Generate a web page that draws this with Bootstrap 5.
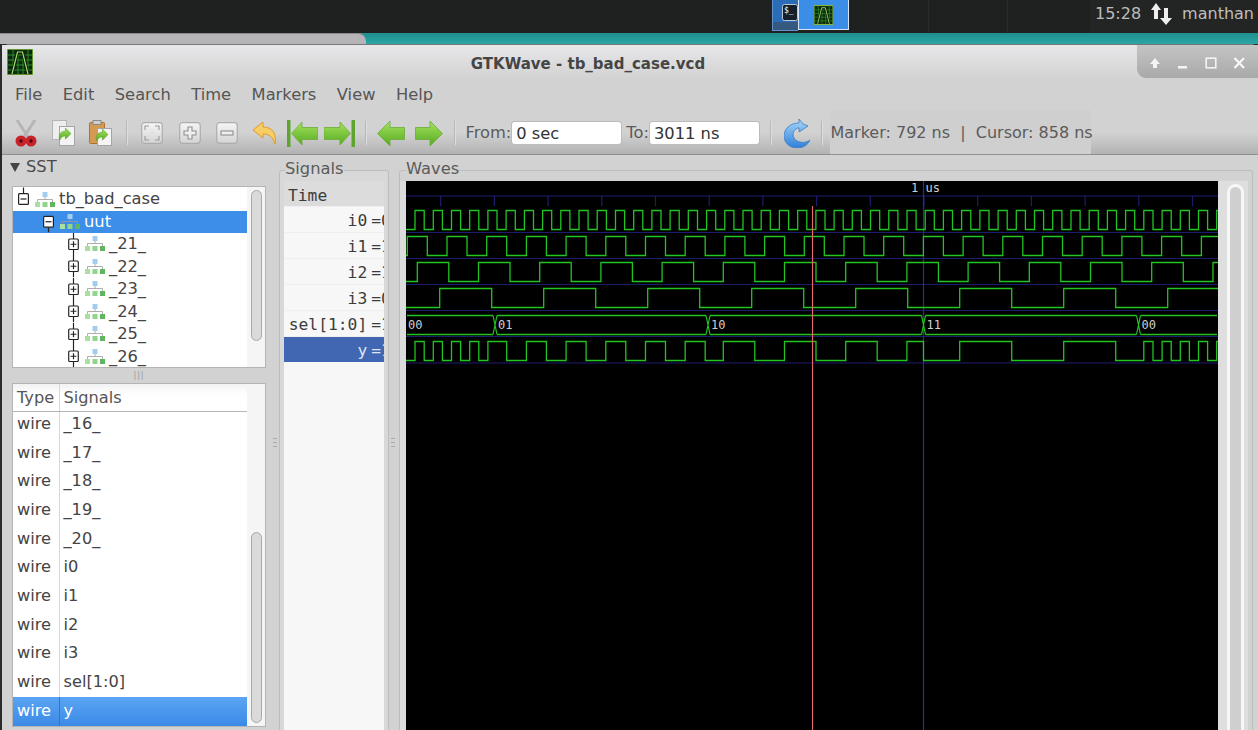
<!DOCTYPE html>
<html lang="en">
<head>
  <meta charset="UTF-8">
  <meta name="viewport" content="width=device-width, initial-scale=1.0">
  <title>GTKWave - tb_bad_case.vcd</title>
  <link rel="stylesheet" href="https://cdn.jsdelivr.net/npm/bootstrap@5.3.0/dist/css/bootstrap.min.css">
  <style>
    html, body { height: 100%; overflow: hidden; }
    body { background: #2b2b2b; font-family: "DejaVu Sans", sans-serif; font-size: 16.3px; color: #4a4a4a; display: flex; flex-direction: column; }

    /* desktop panel */
    .desk-bar { height: 33px; flex: none; background: #1f2120; color: #bdbdbd; }
    .task-group { margin-left: 772px; width: 156px; height: 31px; }
    .task-term { width: 26px; height: 31px; background: linear-gradient(#2a6cb8 0 74%, #35597f 74%); border: 1px solid #5f93cc; border-right: 0; border-top: 0; }
    .task-wave { width: 51px; height: 30px; background: #3b8ee8; border: 1px solid #d5e6f8; border-top: 0; }
    .task-slot { height: 33px; border-left: 1px solid #2a2c2b; }
    .slot-a { width: 79px; }
    .slot-b { width: 83px; }
    .tray { width: 168px; height: 33px; background: #232524; padding: 0 0 5px 5px; gap: 9px; font-size: 16px; }
    .desk-strip { height: 11px; flex: none; background: linear-gradient(#1f8f8f, #2aa6a6); }
    .other-win { width: 366px; background: #b6b4b6; border-top: 1px solid #8d8b8d; border-top-right-radius: 8px; }

    /* window chrome */
    .gtk-win { flex: 1 1 0; min-height: 0; margin-left: 2px; background: #d2d2d2; border-top-left-radius: 7px; border-top-right-radius: 7px; border-top: 1px solid #777; }
    .title-bar { height: 33px; flex: none; background: linear-gradient(#e7e6e9, #d3d3d3); padding-left: 5px; }
    .win-title { font-size: 15px; font-weight: 700; color: #454545; padding: 6px 0 0 6px; }
    .win-btns { width: 121px; height: 33px; background: linear-gradient(#c4c4c4, #a9a9a9); border-bottom-left-radius: 9px; padding: 3px 0 0 4px; }
    .win-btn { width: 28px; }
    .menu-bar { height: 32px; flex: none; padding: 3px 0 0 13px; gap: 20.5px; color: #555; }
    .tool-bar { height: 45px; flex: none; padding: 1px 0 0 5px; background: linear-gradient(#d2d2d2 0 50%, #b2b2b2 98%, #8f8f8f 98%); color: #5b5b5b; }
    .tool-btn { width: 37.5px; }
    .tool-sep { width: 14px; display: flex; justify-content: center; }
    .tool-sep::before { content: ""; width: 2px; height: 24px; background: #dedede; border-left: 1px solid #b8b8b8; }
    .tool-input.form-control { width: 111px; height: 24px; min-height: 0; padding: 0 4px; font-size: 16.3px; line-height: 22px; color: #333; border: 1px solid #bcbcbc; border-radius: 3px; font-family: inherit; }
    .tool-status { background: #cfcfcf; white-space: pre; width: 261px; margin: -1px 0 1px 1px; padding-top: 2px; align-self: stretch; font-size: 16px; }

    /* panes */
    .work-area { flex: 1 1 0; min-height: 0; }
    .pane-sst { width: 270px; flex: none; padding: 0 6px 0 10px; }
    .sst-label { height: 31px; padding-bottom: 6px; gap: 6px; }
    .sst-label i { width: 0; height: 0; border-left: 5px solid transparent; border-right: 5px solid transparent; border-top: 9px solid #444; margin-left: -2px; }
    .box-frame { background: #fff; border: 1px solid #b4b4b4; overflow: hidden; }
    .tree-box { height: 182px; flex: none; }
    .tree-list { width: 234px; color: #444; }
    .tree-row { height: 22.5px; white-space: nowrap; }
    .tree-row.first { height: 24px; }
    .tree-row.sel { height: 21.5px; background: #3c8ee8; color: #fff; }
    .depth-0 { padding-left: 5px; }
    .depth-1 { padding-left: 30px; }
    .depth-2 { padding-left: 55px; }
    .tree-exp { width: 11px; height: 100%; margin-right: 6px; flex: none; }
    .tree-ico { width: 20px; height: 15px; margin-right: 4px; flex: none; }
    .tree-txt { padding-top: 1px; }
    .scroll-col { flex: 1 1 0; background: #f5f5f5; display: flex; justify-content: center; }
    .scroll-thumb { width: 11px; background: #dadada; border: 1px solid #a8a8a8; border-radius: 6px; }
    .tree-box .scroll-thumb { height: 151px; margin-top: 3px; }
    .sig-box { flex: 1 1 0; min-height: 0; margin-bottom: 3px; }
    .sig-box .scroll-thumb { height: 191px; margin-top: 148px; }
    .grip-h { height: 15px; flex: none; color: #999; font-size: 8px; line-height: 15px; text-align: center; letter-spacing: 1px; }
    .grip-v { width: 7px; flex: none; padding-right: 2px; }
    .grip-wide { width: 10px; }
    .grip-dots { width: 4px; height: 9px; border-top: 1px solid #aaa; border-bottom: 1px solid #aaa; position: relative; }
    .grip-dots::after { content: ""; position: absolute; left: 0; right: 0; top: 3px; border-top: 1px solid #aaa; }
    .sig-table { width: 234px; table-layout: fixed; margin: 0; }
    .sig-table th, .sig-table td { padding: 0 0 0 4px; border: 0; border-right: 1px solid #d8d8d8; height: 28.7px; line-height: 28.7px; vertical-align: top; font-size: 16.2px; font-weight: 400; color: #444; background: #fff; }
    .sig-table th:first-child, .sig-table td:first-child { width: 46px; }
    .sig-table th:last-child, .sig-table td:last-child { border-right: 0; }
    .sig-table th { height: 27px; padding-top: 1px; line-height: 26px; color: #555; border-bottom: 1px solid #b5b5b5; background: linear-gradient(#f2f2f2, #fff 40%); }
    .sig-table tr.short td { height: 27px; line-height: 24.5px; }
    .sig-table tr.sel td { background: linear-gradient(#5ba4f3, #3a8ae6); color: #fff; border-right-color: #2f76c8; }

    .gtk-frame { border: 1px solid #bdbdbd; border-bottom: 0; border-radius: 3px 3px 0 0; padding: 0; margin: 4px 0 0; min-width: 0; }
    .gtk-frame legend { float: none; width: auto; margin: 0 0 0 6px; padding: 0 0 2px; font-size: 16.3px; line-height: 20px; color: #5b5b5b; }
    .pane-signals { width: 110px; flex: none; background: #d8d8d8; padding: 0 4px; }
    .pane-signals legend { margin-left: 1px; }
    .sig-names { font-family: "DejaVu Sans Mono", monospace; font-size: 16.3px; background: #f7f7f7; height: 549px; color: #3c3c3c; }
    .name-row { height: 26px; line-height: 27px; white-space: pre; border-bottom: 1px solid #efefef; }
    .name-head { background: #dcdcdc; padding-left: 4px; line-height: 30px; }
    .name-row.sel { background: #4267b2; color: #dbe6fa; border-bottom: 0; height: 25px; }
    .name-eq { margin-left: 4px; }
    .name-val { display: inline-block; width: 3px; overflow: hidden; vertical-align: bottom; }
    .pane-waves { width: 854px; flex: none; background: #d2d2d2; }
    .wave-wrap { width: 848px; height: 549px; overflow: hidden; padding-left: 6px; background: #dcdcdc; }
    .wave-svg { display: block; width: 812px; height: 549px; background: #000; flex: none; }
    .wave-scroll { width: 30px; background: #dedede; padding: 3px 0 0 9px; }
    .wave-thumb { width: 17px; height: 600px; background: #cfcfcf; border: 3px solid #f7f7f7; border-radius: 9px; }
    .wave-label { font-family: "DejaVu Sans Mono", monospace; font-size: 12px; fill: #cfcfcf; }
  </style>
</head>

<body>
  <svg width="0" height="0" class="position-absolute">
    <defs>
      <linearGradient id="grnFill" x1="0" y1="0" x2="0" y2="1">
        <stop offset="0" stop-color="#a5e25c"/><stop offset="1" stop-color="#55ab22"/>
      </linearGradient>
      <linearGradient id="bluFill" x1="0" y1="0" x2="0" y2="1">
        <stop offset="0" stop-color="#a9d8f8"/><stop offset="1" stop-color="#2f7fd8"/>
      </linearGradient>
      <linearGradient id="keyFill" x1="0" y1="0" x2="0" y2="1">
        <stop offset="0" stop-color="#f5f5f5"/><stop offset="1" stop-color="#d4d4d4"/>
      </linearGradient>
      <symbol id="icoWave" viewBox="0 0 26 26">
        <rect width="26" height="26" fill="#0c2a0c" stroke="#7fb83a" stroke-width="1.5"/>
        <path d="M1 6H25M1 11H25M1 16H25M1 21H25M6 1V25M11 1V25M16 1V25M21 1V25" stroke="#2c8a2c" stroke-width="1"/>
        <path d="M5 25L10.5 3H15.5L21 25" fill="none" stroke="#0a1a0a" stroke-width="3"/>
        <path d="M5 25L10.5 3H15.5L21 25" fill="none" stroke="#a6e06a" stroke-width="1.2"/>
      </symbol>
      <symbol id="icoModule" viewBox="0 0 20 15">
        <rect x="7.5" y="0" width="5" height="5" fill="#a3cdf0"/>
        <path d="M10 5V7.5M2.5 10V7.5H17.5V10" fill="none" stroke="#9a9a9a" stroke-width=".8"/>
        <rect x="0" y="10" width="5" height="5" fill="#a9dfa0"/>
        <rect x="7.5" y="10" width="5" height="5" fill="#93d48c"/>
        <rect x="15" y="10" width="5" height="5" fill="#5eb65e"/>
      </symbol>
      <symbol id="expPlus" viewBox="0 0 11 23">
        <path d="M5.5 0V23" stroke="#222" stroke-width="1.2"/>
        <rect x=".6" y="6.1" width="9.8" height="10.8" rx="1" fill="#fff" stroke="#222" stroke-width="1.2"/>
        <path d="M2.5 11.5H8.5M5.5 8.5V14.5" stroke="#222" stroke-width="1.2"/>
      </symbol>
      <symbol id="copyArrow" viewBox="0 0 14 14">
        <path d="M8 0L14 6L8 12V8.5C5 8.5 3 10 2 13C0 7 3 3.5 8 3.5Z" fill="url(#grnFill)" stroke="#5a9e2a" stroke-width=".6"/>
      </symbol>
    </defs>
  </svg>

  <!-- Desktop panel -->
  <div class="desk-bar d-flex">
    <div class="task-group d-flex">
      <div class="task-term d-flex justify-content-end pt-1">
        <svg width="16" height="18" viewBox="0 0 16 18"><rect x=".5" y=".5" width="15" height="16" rx="2" fill="#16202b" stroke="#b9c6d4"/><text x="2" y="9" font-size="8" fill="#fff" font-family="DejaVu Sans Mono">$_</text></svg>
      </div>
      <div class="task-wave d-flex align-items-center justify-content-center">
        <svg width="19" height="24"><use href="#icoWave"/></svg>
      </div>
    </div>
    <div class="task-slot slot-a"></div>
    <div class="task-slot slot-b"></div>
    <div class="tray d-flex align-items-center">
      <span>15:28</span>
      <svg width="23" height="24" viewBox="0 0 23 24"><path d="M6 1L11 8H8V17H4V8H1Z" fill="#eee"/><path d="M14 6H18V16H22L16 23L10 16H14Z" fill="#eee"/></svg>
      <span>manthan</span>
    </div>
  </div>

  <div class="desk-strip d-flex"><div class="other-win"></div></div>

  <!-- GTKWave window -->
  <div class="gtk-win d-flex flex-column">
    <div class="title-bar d-flex align-items-start">
      <svg class="mt-1" width="26" height="26"><use href="#icoWave"/></svg>
      <div class="win-title flex-grow-1 text-center align-self-center">GTKWave - tb_bad_case.vcd</div>
      <div class="win-btns d-flex align-items-center">
        <div class="win-btn d-flex justify-content-center"><svg width="12" height="12" viewBox="0 0 12 12"><path d="M6 1L11 7H8V11H4V7H1Z" fill="#f4f4f4"/></svg></div>
        <div class="win-btn d-flex justify-content-center"><svg width="12" height="12" viewBox="0 0 12 12"><rect x="1" y="9" width="9" height="2.5" fill="#f4f4f4"/></svg></div>
        <div class="win-btn d-flex justify-content-center"><svg width="12" height="12" viewBox="0 0 12 12"><rect x="1.2" y="1.2" width="9.6" height="9.6" fill="none" stroke="#f4f4f4" stroke-width="1.6"/></svg></div>
        <div class="win-btn d-flex justify-content-center"><svg width="12" height="12" viewBox="0 0 12 12"><path d="M1.5 1L11 11M11 1L1.5 11" stroke="#f7f7f7" stroke-width="2.2"/></svg></div>
      </div>
    </div>

    <div class="menu-bar d-flex align-items-center">
      <span>File</span><span>Edit</span><span>Search</span><span>Time</span><span>Markers</span><span>View</span><span>Help</span>
    </div>

    <div class="tool-bar d-flex align-items-center">
      <div class="tool-btn d-flex justify-content-center">
        <svg width="22" height="27" viewBox="0 0 22 27">
          <path d="M2 0L13 17M20 0L9 17" stroke="#b5b5b5" stroke-width="3"/>
          <circle cx="6" cy="21" r="5.5" fill="#c8222a"/>
          <circle cx="16" cy="21" r="5.5" fill="#c8222a"/>
          <circle cx="6" cy="21" r="1.7" fill="#4a0c0c"/>
          <circle cx="16" cy="21" r="1.7" fill="#4a0c0c"/>
        </svg>
      </div>
      <div class="tool-btn d-flex justify-content-center">
        <svg width="23" height="26" viewBox="0 0 23 26">
          <rect x=".5" y=".5" width="14" height="19" fill="#eeeeee" stroke="#b5b5b5"/>
          <rect x="7.5" y="6.5" width="15" height="19" fill="#f4f4f4" stroke="#a5a5a5"/>
          <use href="#copyArrow" x="6" y="8" width="13" height="13"/>
        </svg>
      </div>
      <div class="tool-btn d-flex justify-content-center">
        <svg width="23" height="26" viewBox="0 0 23 26">
          <rect x=".5" y="2.5" width="15" height="21" rx="1" fill="#d49a52" stroke="#a87433"/>
          <rect x="4" y=".5" width="8" height="4" fill="#cfcfcf" stroke="#8a8a8a"/>
          <rect x="8.5" y="8.5" width="14" height="17" fill="#f4f4f4" stroke="#a5a5a5"/>
          <use href="#copyArrow" x="6" y="9" width="13" height="13"/>
        </svg>
      </div>
      <div class="tool-sep"></div>
      <div class="tool-btn d-flex justify-content-center">
        <svg width="22" height="22" viewBox="0 0 22 22">
          <rect x=".7" y=".7" width="20.6" height="20.6" rx="3" fill="url(#keyFill)" stroke="#adadad" stroke-width="1.2"/>
          <path d="M4 8V4H8M14 4H18V8M18 14V18H14M8 18H4V14" fill="none" stroke="#9a9a9a" stroke-width="1.1"/>
          <circle cx="11" cy="11" r="2.6" fill="#e2e2e2"/>
        </svg>
      </div>
      <div class="tool-btn d-flex justify-content-center">
        <svg width="22" height="22" viewBox="0 0 22 22">
          <rect x=".7" y=".7" width="20.6" height="20.6" rx="3" fill="url(#keyFill)" stroke="#adadad" stroke-width="1.2"/>
          <path d="M9 5H13V9H17V13H13V17H9V13H5V9H9Z" fill="#efefef" stroke="#8f8f8f" stroke-width="1.1"/>
        </svg>
      </div>
      <div class="tool-btn d-flex justify-content-center">
        <svg width="22" height="22" viewBox="0 0 22 22">
          <rect x=".7" y=".7" width="20.6" height="20.6" rx="3" fill="url(#keyFill)" stroke="#adadad" stroke-width="1.2"/>
          <rect x="5" y="9" width="12" height="4" fill="#efefef" stroke="#8f8f8f" stroke-width="1.1"/>
        </svg>
      </div>
      <div class="tool-btn d-flex justify-content-center">
        <svg width="24" height="23" viewBox="0 0 24 23">
          <path d="M0 8L10 0V5C19 5 24 11 22 22C20 15 16 12 10 12V16Z" fill="#f8cd66" stroke="#dd9c2c" stroke-width="1"/>
        </svg>
      </div>
      <div class="tool-btn d-flex justify-content-center">
        <svg width="31" height="27" viewBox="0 0 31 27">
          <rect x="0" y="0" width="3.5" height="27" fill="#5ea52f"/>
          <path d="M4.5 13.5L15 2V7.5H31V19.5H15V25Z" fill="url(#grnFill)" stroke="#6cab38" stroke-width=".8"/>
        </svg>
      </div>
      <div class="tool-btn d-flex justify-content-center">
        <svg width="31" height="27" viewBox="0 0 31 27">
          <rect x="27.5" y="0" width="3.5" height="27" fill="#5ea52f"/>
          <path d="M26.5 13.5L16 2V7.5H0V19.5H16V25Z" fill="url(#grnFill)" stroke="#6cab38" stroke-width=".8"/>
        </svg>
      </div>
      <div class="tool-sep"></div>
      <div class="tool-btn d-flex justify-content-center">
        <svg width="28" height="27" viewBox="0 0 28 27">
          <path d="M.5 13.5L13 1V7.5H27.5V19.5H13V26Z" fill="url(#grnFill)" stroke="#6cab38" stroke-width=".8"/>
        </svg>
      </div>
      <div class="tool-btn d-flex justify-content-center">
        <svg width="28" height="27" viewBox="0 0 28 27">
          <path d="M27.5 13.5L15 1V7.5H.5V19.5H15V26Z" fill="url(#grnFill)" stroke="#6cab38" stroke-width=".8"/>
        </svg>
      </div>
      <div class="tool-sep"></div>
      <span class="ms-1">From:</span>
      <input class="form-control tool-input" value="0 sec">
      <span class="ms-1">To:</span>
      <input class="form-control tool-input" value="3011 ns">
      <div class="tool-sep ms-1"></div>
      <div class="tool-btn d-flex justify-content-center">
        <svg width="26" height="29" viewBox="0 0 26 29">
          <path d="M19 5L15 0V4C6 4 0 10 0 17C0 24 6 29 13 29C19 29 24 26 26 21C22 24 17 24 13 22C8 19 8 13 12 10C13 9 14 9 15 9V13L24 7Z" fill="url(#bluFill)" stroke="#3a7fc8" stroke-width=".8"/>
        </svg>
      </div>
      <div class="tool-sep ms-n1"></div>
      <div class="tool-status d-flex align-items-center">Marker: 792 ns  |  Cursor: 858 ns</div>
    </div>

    <div class="work-area d-flex">
      <!-- SST -->
      <div class="pane-sst d-flex flex-column">
        <div class="sst-label d-flex align-items-center"><i></i><span>SST</span></div>
        <div class="box-frame tree-box d-flex">
          <ul class="tree-list list-unstyled mb-0">
            <li class="tree-row first depth-0 d-flex align-items-center">
              <svg class="tree-exp" viewBox="0 0 11 23"><path d="M5.5 0V7" stroke="#222" stroke-width="1.2"/><rect x=".6" y="6.1" width="9.8" height="10.8" rx="1" fill="#fff" stroke="#222" stroke-width="1.2"/><path d="M2.5 11.5H8.5" stroke="#222" stroke-width="1.2"/></svg>
              <svg class="tree-ico"><use href="#icoModule"/></svg><span class="tree-txt">tb_bad_case</span>
            </li>
            <li class="tree-row sel depth-1 d-flex align-items-center">
              <svg class="tree-exp" viewBox="0 0 11 21"><path d="M5.5 16V21" stroke="#222" stroke-width="1.2"/><rect x=".6" y="5.1" width="9.8" height="10.8" rx="1" fill="#fff" stroke="#222" stroke-width="1.2"/><path d="M2.5 10.5H8.5" stroke="#222" stroke-width="1.2"/></svg>
              <svg class="tree-ico"><use href="#icoModule"/></svg><span class="tree-txt">uut</span>
            </li>
            <li class="tree-row depth-2 d-flex align-items-center"><svg class="tree-exp"><use href="#expPlus"/></svg><svg class="tree-ico"><use href="#icoModule"/></svg><span class="tree-txt">_21_</span></li>
            <li class="tree-row depth-2 d-flex align-items-center"><svg class="tree-exp"><use href="#expPlus"/></svg><svg class="tree-ico"><use href="#icoModule"/></svg><span class="tree-txt">_22_</span></li>
            <li class="tree-row depth-2 d-flex align-items-center"><svg class="tree-exp"><use href="#expPlus"/></svg><svg class="tree-ico"><use href="#icoModule"/></svg><span class="tree-txt">_23_</span></li>
            <li class="tree-row depth-2 d-flex align-items-center"><svg class="tree-exp"><use href="#expPlus"/></svg><svg class="tree-ico"><use href="#icoModule"/></svg><span class="tree-txt">_24_</span></li>
            <li class="tree-row depth-2 d-flex align-items-center"><svg class="tree-exp"><use href="#expPlus"/></svg><svg class="tree-ico"><use href="#icoModule"/></svg><span class="tree-txt">_25_</span></li>
            <li class="tree-row depth-2 d-flex align-items-center"><svg class="tree-exp"><use href="#expPlus"/></svg><svg class="tree-ico"><use href="#icoModule"/></svg><span class="tree-txt">_26_</span></li>
          </ul>
          <div class="scroll-col"><div class="scroll-thumb"></div></div>
        </div>
        <div class="grip-h">|||</div>
        <div class="box-frame sig-box d-flex">
          <div>
            <table class="table sig-table">
              <thead><tr><th>Type</th><th>Signals</th></tr></thead>
              <tbody>
                <tr class="short"><td>wire</td><td>_16_</td></tr>
                <tr><td>wire</td><td>_17_</td></tr>
                <tr><td>wire</td><td>_18_</td></tr>
                <tr><td>wire</td><td>_19_</td></tr>
                <tr><td>wire</td><td>_20_</td></tr>
                <tr><td>wire</td><td>i0</td></tr>
                <tr><td>wire</td><td>i1</td></tr>
                <tr><td>wire</td><td>i2</td></tr>
                <tr><td>wire</td><td>i3</td></tr>
                <tr><td>wire</td><td>sel[1:0]</td></tr>
                <tr class="sel"><td>wire</td><td>y</td></tr>
              </tbody>
            </table>
          </div>
          <div class="scroll-col"><div class="scroll-thumb"></div></div>
        </div>
      </div>

      <div class="grip-v d-flex align-items-center justify-content-center"><div class="grip-dots"></div></div>

      <!-- Signals -->
      <fieldset class="gtk-frame pane-signals">
        <legend>Signals</legend>
        <div class="sig-names">
          <div class="name-row name-head">Time</div>
          <div class="name-row text-end">i0<span class="name-eq">=</span><span class="name-val">0</span></div>
          <div class="name-row text-end">i1<span class="name-eq">=</span><span class="name-val">1</span></div>
          <div class="name-row text-end">i2<span class="name-eq">=</span><span class="name-val">1</span></div>
          <div class="name-row text-end">i3<span class="name-eq">=</span><span class="name-val">0</span></div>
          <div class="name-row text-end">sel[1:0]<span class="name-eq">=</span><span class="name-val">1</span></div>
          <div class="name-row sel text-end">y<span class="name-eq">=</span><span class="name-val">1</span></div>
        </div>
      </fieldset>

      <div class="grip-v grip-wide d-flex align-items-center justify-content-center"><div class="grip-dots"></div></div>

      <!-- Waves -->
      <fieldset class="gtk-frame pane-waves">
        <legend>Waves</legend>
        <div class="wave-wrap d-flex">
          <svg class="wave-svg" id="waveSvg" viewBox="406 181 812 549"></svg>
          <div class="wave-scroll"><div class="wave-thumb"></div></div>
        </div>
      </fieldset>
    </div>
  </div>

  <script>
    // signal edges measured off the trace, y is the mux of the four inputs
    const clock = (x0, period, high) => x => x >= x0 && ((x - x0) % period) < high;
    const i0 = clock(415, 18.22, 9.11);
    const i1 = clock(407.3, 39.7, 20);
    const i2 = clock(417.3, 61.2, 31.5);
    const i3 = clock(439.7, 104, 52);
    const sel = [[406, 495, '00', i0], [495, 708, '01', i1], [708, 923.5, '10', i2], [923.5, 1138.5, '11', i3], [1138.5, 1218, '00', i0]];
    const y = x => sel.find(s => x < s[1] || s[1] === 1218)[3](x);

    function trace(fn, hi, lo) {
      let v = fn(406);
      let d = `M406 ${v ? hi : lo}`;
      for (let x = 406; x < 1218; x += 0.1) {
        if (fn(x) !== v) {
          v = !v;
          d += `H${x.toFixed(1)}V${v ? hi : lo}`;
        }
      }
      return d + `H1218`;
    }

    let out = '';
    const blue = '#1d1d70';
    [196, 232.5, 258.5, 284.5, 310.5, 336.5, 363].forEach(ly => {
      out += `<path d="M406 ${ly}H1218" stroke="${blue}"/>`;
    });
    for (let i = 0; i < 15; i++) {
      const tx = 440.7 + i * 53.7;
      out += `<path d="M${tx.toFixed(1)} 196V206" stroke="${blue}" stroke-width="1.2"/>`;
    }
    out += `<path d="M923.5 181V730" stroke="#2a2aa8" stroke-width="1.2"/>`;
    out += `<text class="wave-label" x="911" y="192">1 us</text>`;

    [[i0, 210.5, 229.5], [i1, 236.5, 255.5], [i2, 262.5, 281.5], [i3, 288.5, 307.5], [y, 341.5, 360.5]].forEach(t => {
      out += `<path d="${trace(t[0], t[1], t[2])}" fill="none" stroke="#22c422" stroke-width="1.3"/>`;
    });

    sel.forEach(s => {
      const a = s[0] === 406 ? 407 : s[0] + 2;
      const b = s[1] === 1218 ? 1217 : s[1] - 2;
      out += `<path d="M${a} 315.5H${b}M${a} 334.5H${b}" stroke="#22c422" stroke-width="1.3"/>`;
      if (s[1] !== 1218) {
        out += `<path d="M${b} 315.5L${b + 4} 334.5M${b} 334.5L${b + 4} 315.5" stroke="#22c422" stroke-width="1.2"/>`;
      }
      out += `<text class="wave-label" x="${s[0] === 406 ? 408 : s[0] + 3}" y="329">${s[2]}</text>`;
    });

    out += `<path d="M812.5 206V730" stroke="#e86a6a" stroke-width="1.1"/>`;
    document.getElementById('waveSvg').innerHTML = out;
  </script>
  <script src="https://cdn.jsdelivr.net/npm/bootstrap@5.3.0/dist/js/bootstrap.bundle.min.js"></script>
</body>
</html>
